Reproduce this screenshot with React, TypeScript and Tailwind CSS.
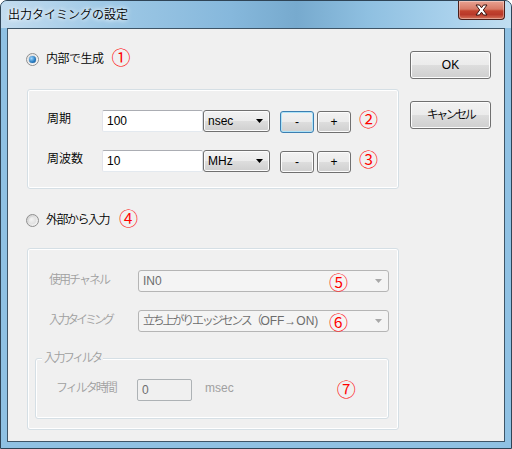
import React from "react";

const F = "font-['Liberation_Sans','Noto_Sans_CJK_JP',sans-serif]";

function Circ({ n }: { n: string }) {
  return (
    <span className="text-[19px] leading-[18px] font-[350] text-[#ff0000] font-['Noto_Sans_CJK_JP',sans-serif]">
      {n}
    </span>
  );
}

function Radio({ on }: { on: boolean }) {
  return (
    <span
      className={`w-[13px] h-[13px] rounded-full border border-[#8f8f8f] ${
        on ? "bg-gradient-to-br from-[#e4e4e4] to-[#ffffff]" : "bg-gradient-to-br from-[#cfcfcf] to-[#f8f8f8]"
      } flex items-center justify-center shrink-0`}
    >
      {on ? (
        <span className="w-[7px] h-[7px] rounded-full bg-[radial-gradient(circle_at_35%_35%,#9fd7ff,#2a7fc4_55%,#0d4a86)] shadow-[0_0_1px_#1d4f7a]" />
      ) : (
        <span className="w-[7px] h-[7px] rounded-full bg-[radial-gradient(circle_at_35%_35%,#f4f4f4,#d9d9d9)]" />
      )}
    </span>
  );
}

function Arrow({ c }: { c: string }) {
  return (
    <svg width="7" height="4" viewBox="0 0 7 4">
      <path d="M0 0H7L3.5 4Z" fill={c} />
    </svg>
  );
}

function Btn({ children, focus, w, h }: { children: React.ReactNode; focus?: boolean; w: string; h: string }) {
  return (
    <div
      className={`${w} ${h} rounded-[3px] border ${
        focus ? "border-[#3c7fb1] shadow-[inset_0_0_0_1px_#aee3f8]" : "border-[#707070] shadow-[inset_0_0_0_1px_#fcfcfc]"
      } bg-[linear-gradient(#f2f2f2_0%,#ebebeb_50%,#dddddd_51%,#cfcfcf_100%)] flex items-center justify-center text-[12px] text-black`}
    >
      {children}
    </div>
  );
}

function GroupBox({ className, children }: { className: string; children?: React.ReactNode }) {
  return (
    <div className={`rounded-[3px] border border-[#d5dfe5] shadow-[inset_0_0_0_1px_#ffffff] ${className}`}>
      {children}
    </div>
  );
}

function TextBox({ w, v, disabled }: { w: string; v: string; disabled?: boolean }) {
  return (
    <div
      className={`${w} h-[22px] border ${
        disabled
          ? "border-[#adb2b5] bg-[#f0f0f0] text-[#6d6d6d]"
          : "border-[#abadb3] border-l-[#e2e3ea] border-r-[#dbdfe6] border-b-[#e3e9ef] bg-white text-black"
      } rounded-[2px] flex items-center pl-[4px] text-[12px]`}
    >
      {v}
    </div>
  );
}

function Combo({ v }: { v: string }) {
  return (
    <div className="w-[67px] h-[22px] rounded-[3px] border border-[#707070] shadow-[inset_0_0_0_1px_#fcfcfc] bg-[linear-gradient(#f2f2f2_0%,#ebebeb_50%,#dddddd_51%,#cfcfcf_100%)] flex items-center justify-between pl-[4px] pr-[6px] text-[12px] text-black">
      <span>{v}</span>
      <Arrow c="#000" />
    </div>
  );
}

function DisCombo({ children, n }: { children: React.ReactNode; n: string }) {
  return (
    <div className="w-[251px] h-[22px] rounded-[3px] border border-[#b5b5b5] bg-[#f4f4f4] flex items-center pl-[4px] pr-[6px] text-[12px] text-[#6d6d6d] relative">
      <span className="whitespace-nowrap">{children}</span>
      <span className="absolute left-[190px] top-[2px]">
        <Circ n={n} />
      </span>
      <span className="ml-auto">
        <Arrow c="#a8a8a8" />
      </span>
    </div>
  );
}

export default function App() {
  return (
    <div className={`${F} font-[350] w-[512px] h-[449px] rounded-t-[7px] border border-[#2f4456] bg-[#8fc1e3] flex flex-col overflow-hidden`}>
      <div className="h-[27px] flex items-start justify-between bg-[linear-gradient(90deg,#c3dcef_0%,#9fc9e6_20%,#86b8dc_45%,#77aace_58%,#8fc0e1_72%,#a9d1ec_88%,#c1def1_100%)]">
        <div className="pl-[7px] pt-[6px] text-[12px] leading-[16px] text-black [text-shadow:0_0_6px_#ffffff,0_0_4px_#ffffff]">
          出力タイミングの設定
        </div>
        <div className="mr-[6px] w-[47px] h-[19px] rounded-b-[4px] border border-t-0 border-[#4a1f1a] bg-[linear-gradient(#e8a292_0%,#d77a66_45%,#c2432e_55%,#b9392a_75%,#d6735a_100%)] shadow-[inset_0_0_0_1px_rgba(255,255,255,0.35)] flex items-center justify-center">
          <svg width="15" height="12" viewBox="0 0 15 12">
            <path
              d="M2 1H5.5L7.5 3.8L9.5 1H13L9.3 6L13 11H9.5L7.5 8.2L5.5 11H2L5.7 6Z"
              fill="#ffffff"
              stroke="#3b1410"
              strokeWidth="1"
              strokeLinejoin="round"
            />
          </svg>
        </div>
      </div>
      <div className="flex-1 px-[6px] pb-[6px] flex">
        <div className="flex-1 border border-[#3e5567] bg-[#f0f0f0] flex">
          {/* left column */}
          <div className="ml-[19px] w-[372px] flex flex-col">
            <div className="mt-[22px] h-[16px] flex items-center -ml-px">
              <Radio on />
              <span className="ml-[7px] text-[12px] text-black tracking-[-0.5px]">内部で生成</span>
              <span className="ml-[8px] mt-[1px]"><Circ n="①" /></span>
            </div>
            <GroupBox className="mt-[22px] h-[100px] pt-[20px] pl-[19px] flex flex-col gap-[18px]">
              {[
                ["周期", "100", "nsec", "②", true],
                ["周波数", "10", "MHz", "③", false],
              ].map(([l, v, u, n, f]) => (
                <div key={l as string} className="flex items-center h-[22px]">
                  <span className="w-[55px] text-[12px] text-black -mt-[5px]">{l as string}</span>
                  <TextBox w="w-[101px]" v={v as string} />
                  <Combo v={u as string} />
                  <div className="ml-[10px] flex gap-[3px] mt-[2px]">
                    <Btn w="w-[34px]" h="h-[22px]" focus={f as boolean}>-</Btn>
                    <Btn w="w-[34px]" h="h-[22px]">+</Btn>
                  </div>
                  <span className="ml-[8px] mt-[2px]"><Circ n={n as string} /></span>
                </div>
              ))}
            </GroupBox>
            <div className="mt-[23px] h-[16px] flex items-center -ml-px">
              <Radio on={false} />
              <span className="ml-[7px] text-[12px] text-black tracking-[-1.5px]">外部から入力</span>
              <span className="ml-[10px] mt-[1px]"><Circ n="④" /></span>
            </div>
            <GroupBox className="mt-[20px] h-[182px] pt-[21px] flex flex-col">
              <div className="pl-[21px] flex items-center h-[22px]">
                <span className="w-[89px] text-[12px] text-[#a0a0a0] -mt-[3px] tracking-[-2px]">使用チャネル</span>
                <DisCombo n="⑤">IN0</DisCombo>
              </div>
              <div className="pl-[21px] mt-[18px] flex items-center h-[22px]">
                <span className="w-[89px] text-[12px] text-[#a0a0a0] -mt-[3px] tracking-[-3px] whitespace-nowrap">入力タイミング</span>
                <DisCombo n="⑥">
                  <span className="tracking-[-2.2px]">立ち上がりエッジセンス（</span>
                  <span>OFF→ON)</span>
                </DisCombo>
              </div>
              <GroupBox className="relative ml-[7px] mt-[26px] w-[354px] h-[61px] pt-[20px] pl-[20px]">
                <span className="absolute left-[6px] top-[-10px] px-[2px] bg-[#f0f0f0] text-[12px] text-[#a0a0a0] tracking-[-2.5px]">
                  入力フィルタ
                </span>
                <div className="flex items-center h-[22px]">
                  <span className="w-[81px] text-[12px] text-[#a0a0a0] -mt-[5px] tracking-[-2px] whitespace-nowrap">フィルタ時間</span>
                  <TextBox w="w-[55px]" v="0" disabled />
                  <span className="ml-[13px] text-[12px] text-[#a0a0a0] -mt-[5px]">msec</span>
                  <span className="ml-[103px] mt-[3px]"><Circ n="⑦" /></span>
                </div>
              </GroupBox>
            </GroupBox>
          </div>
          {/* right column */}
          <div className="ml-[11px] mt-[22px] flex flex-col gap-[22px]">
            <Btn w="w-[81px]" h="h-[28px]">OK</Btn>
            <Btn w="w-[81px]" h="h-[28px]"><span className="tracking-[-2.5px]">キャンセル</span></Btn>
          </div>
        </div>
      </div>
    </div>
  );
}
